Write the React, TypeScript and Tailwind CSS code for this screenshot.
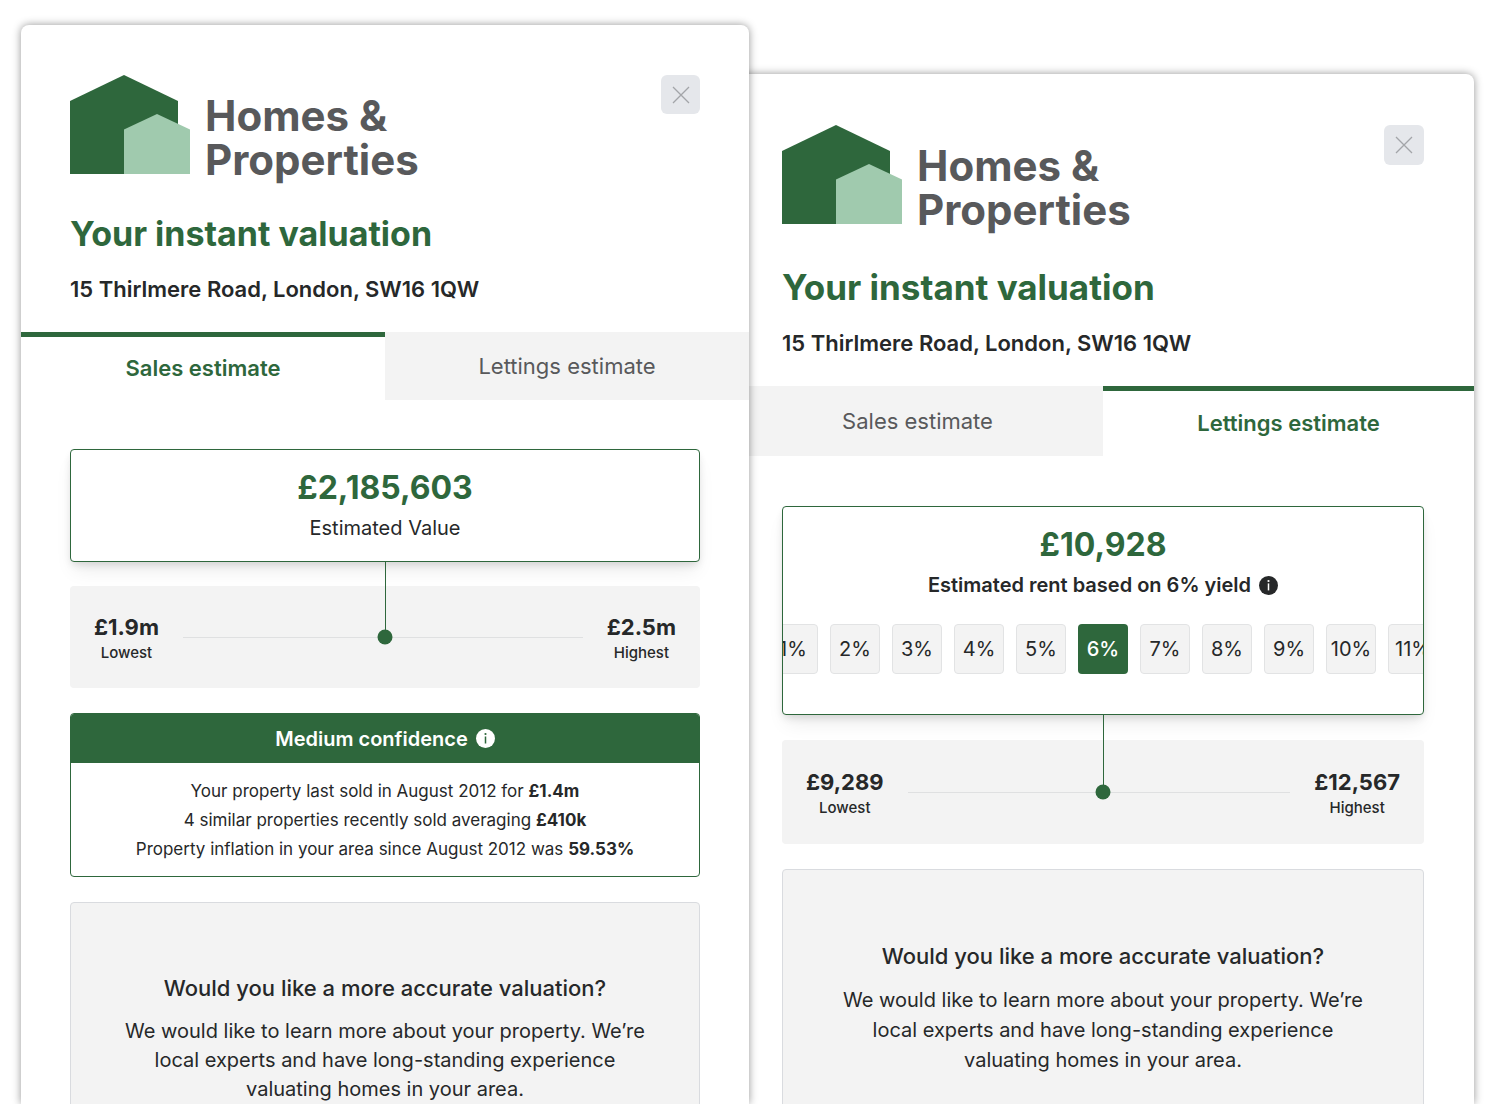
import React, { useState } from "react";

type Size = "regular" | "large";

const sizes = {
  regular: {
    pad: "px-[49px]",
    top: "pt-[50px]",
    title: "mt-[31px] text-[34px]",
    address: "mt-5 text-[22px]",
    tabs: "h-[68px] mt-[29px]",
    body: "pt-[49px]",
    cta: "pt-[70px]",
    copy: "leading-[29px]",
    close: "size-[39px]",
  },
  large: {
    pad: "px-[50px]",
    top: "pt-[51px]",
    title: "mt-[34px] text-[35px]",
    address: "mt-[21px] text-[22px]",
    tabs: "h-[70px] mt-[29px]",
    body: "pt-[50px]",
    cta: "pt-[71px]",
    copy: "leading-[30px]",
    close: "size-[40px]",
  },
};

function Logo() {
  return (
    <div className="flex items-start gap-[15px]">
      <svg width="120" height="99" viewBox="0 0 120 99" aria-hidden="true" className="shrink-0">
        <path d="M0 26 54 0l54 26v73H0z" fill="#2e673c" />
        <path d="M54 54.5 87 39l33 15.5V99H54z" fill="#a0caae" />
      </svg>
      <p className="pt-[19px] text-[42px] leading-[44px] font-bold text-[#58595b]">
        Homes &amp;
        <br />
        Properties
      </p>
    </div>
  );
}

function InfoIcon() {
  return (
    <button type="button" aria-label="More information" className="shrink-0">
      <svg width="19" height="19" viewBox="0 0 19 19" aria-hidden="true">
        <circle cx="9.5" cy="9.5" r="9.5" fill="currentColor" />
        <circle cx="9.5" cy="5" r="1.1" className="fill-(--hole)" />
        <path d="M9.5 7.4v7" fill="none" strokeWidth="1.5" className="stroke-(--hole)" />
      </svg>
    </button>
  );
}

function Range({ low, high, className }: { low: string; high: string; className: string }) {
  return (
    <div
      className={`relative flex items-center gap-6 rounded-[4px] bg-[#f3f3f3] px-6 text-center ${className}`}
    >
      <div>
        <p className="text-[22px] leading-8 font-bold">{low}</p>
        <p className="text-[15px] leading-5 font-medium">Lowest</p>
      </div>
      <div className="h-px flex-1 bg-[#dfe0e1]" />
      <div>
        <p className="text-[22px] leading-8 font-bold">{high}</p>
        <p className="text-[15px] leading-5 font-medium">Highest</p>
      </div>
      <div className="absolute -top-[25px] bottom-1/2 left-1/2 w-px bg-[#2e673c]" />
      <div className="absolute top-1/2 left-1/2 size-[15px] -translate-x-1/2 -translate-y-1/2 rounded-full bg-[#2e673c]" />
    </div>
  );
}

function Tab({ active, children }: { active: boolean; children: React.ReactNode }) {
  return (
    <button
      type="button"
      role="tab"
      aria-selected={active}
      className={
        active
          ? "flex-1 border-t-[5px] border-[#2e673c] text-[22px] font-semibold text-[#2e673c]"
          : "flex-1 bg-[#f3f3f3] text-[22px] text-[#58595b]"
      }
    >
      {children}
    </button>
  );
}

function Panel({
  size,
  tab,
  className,
  children,
}: {
  size: Size;
  tab: "sales" | "lettings";
  className: string;
  children: React.ReactNode;
}) {
  const s = sizes[size];
  return (
    <section
      className={`min-w-0 rounded-t-[8px] bg-white shadow-[0_0_8px_rgba(0,0,0,0.42)] ${className}`}
    >
      <header className={`${s.pad} ${s.top}`}>
        <div className="flex items-start justify-between">
          <Logo />
          <button
            type="button"
            aria-label="Close"
            className={`flex items-center justify-center rounded-[6px] bg-[#e5e7eb] text-[#a3a5a8] ${s.close}`}
          >
            <svg width="18" height="18" viewBox="0 0 18 18" aria-hidden="true">
              <path d="m1 1 16 16M17 1 1 17" stroke="currentColor" strokeWidth="1.3" />
            </svg>
          </button>
        </div>
        <h1 className={`leading-[42px] font-bold text-[#2e673c] ${s.title}`}>Your instant valuation</h1>
        <p className={`leading-7 font-semibold ${s.address}`}>15 Thirlmere Road, London, SW16 1QW</p>
      </header>
      <div role="tablist" className={`flex ${s.tabs}`}>
        <Tab active={tab === "sales"}>Sales estimate</Tab>
        <Tab active={tab === "lettings"}>Lettings estimate</Tab>
      </div>
      <div className={`${s.pad} ${s.body}`}>
        {children}
        <div
          className={`mt-[25px] rounded-[4px] border border-[#d9dbdf] bg-[#f3f3f3] px-12 pb-20 text-center ${s.cta}`}
        >
          <h2 className="text-[22px] leading-[30px] font-medium">Would you like a more accurate valuation?</h2>
          <p className={`mt-[14px] text-[20px] ${s.copy}`}>
            We would like to learn more about your property. We’re local experts and have long-standing experience
            valuating homes in your area.
          </p>
        </div>
      </div>
    </section>
  );
}

const valueBox =
  "rounded-[4px] border border-[#2e673c] bg-white pt-[18px] text-center shadow-[0_12px_18px_-4px_rgba(0,0,0,0.08),0_4px_8px_-2px_rgba(0,0,0,0.14)]";
const valueText = "text-[32px] leading-10 font-bold text-[#2e673c]";

const yields = [1, 2, 3, 4, 5, 6, 7, 8, 9, 10, 11];

export default function App() {
  const [selected, setSelected] = useState(6);
  return (
    <main className="flex h-screen items-stretch overflow-hidden bg-white pr-[22px] pl-[21px] font-['Inter',sans-serif] text-[#262829]">
      <Panel size="regular" tab="sales" className="relative z-10 mt-[25px] flex-[728]">
        <div className={valueBox}>
          <p className={valueText}>£2,185,603</p>
          <p className="mt-1.5 pb-[19px] text-[20px] leading-7">Estimated Value</p>
        </div>
        <Range low="£1.9m" high="£2.5m" className="mt-6 py-[25px]" />
        <div className="mt-[25px] overflow-hidden rounded-[4px] border border-[#2e673c] text-center">
          <h2 className="flex h-[49px] items-center justify-center gap-2 bg-[#2e673c] text-[20px] font-semibold text-white [--hole:#2e673c]">
            Medium confidence
            <InfoIcon />
          </h2>
          <div className="pt-[14px] pb-3 text-[17px] leading-[29px]">
            <p>
              Your property last sold in August 2012 for <strong>£1.4m</strong>
            </p>
            <p>
              4 similar properties recently sold averaging <strong>£410k</strong>
            </p>
            <p>
              Property inflation in your area since August 2012 was <strong>59.53%</strong>
            </p>
          </div>
        </div>
      </Panel>
      <Panel size="large" tab="lettings" className="mt-[74px] -ml-[17px] flex-[742]">
        <div className={valueBox}>
          <p className={valueText}>£10,928</p>
          <p className="mt-1.5 flex items-center justify-center gap-2 text-[20px] leading-7 font-semibold [--hole:#ffffff]">
            Estimated rent based on {selected}% yield
            <InfoIcon />
          </p>
          <div className="mt-[25px] mb-10 flex justify-center gap-3 overflow-hidden">
            {yields.map((y) => (
              <button
                key={y}
                type="button"
                aria-pressed={y === selected}
                onClick={() => setSelected(y)}
                className={
                  y === selected
                    ? "size-[50px] shrink-0 rounded-[4px] bg-[#2e673c] text-[20px] font-medium text-white"
                    : "size-[50px] shrink-0 rounded-[4px] border border-[#e2e3e4] bg-[#f3f3f3] text-[20px]"
                }
              >
                {y}%
              </button>
            ))}
          </div>
        </div>
        <Range low="£9,289" high="£12,567" className="mt-[25px] py-[26px]" />
      </Panel>
    </main>
  );
}
